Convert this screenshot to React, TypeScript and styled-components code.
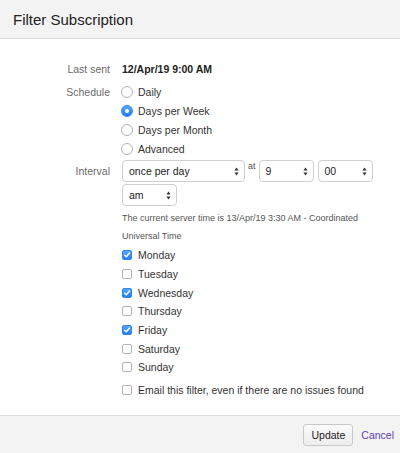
import React from 'react';
import styled, { createGlobalStyle } from 'styled-components';

const GlobalStyle = createGlobalStyle`
  html, body { margin: 0; padding: 0; background: #fff; }
  body { font-family: "Liberation Sans", Arial, sans-serif; color: #333; }
`;

// ─── Layout ──────────────────────────────────────────────────────────────────

const Dialog = styled.div`
  width: 400px;
  height: 453px;
  display: flex;
  flex-direction: column;
  background: #fff;
`;

const Header = styled.div`
  height: 39px;
  flex-shrink: 0;
  background: #f3f3f3;
  border-bottom: 1px solid #dcdcdc;
  display: flex;
  align-items: center;
  padding: 0 13px;
  box-sizing: border-box;
`;

const Title = styled.h2`
  margin: 0;
  font-size: 15px;
  font-weight: 400;
  color: #222;
`;

const Body = styled.div`
  flex: 1;
  padding-top: 21px;
  display: grid;
  grid-template-columns: 110px 1fr;
  column-gap: 12px;
  align-content: start;
  font-size: 10.5px;
`;

const Label = styled.div<{ top?: number }>`
  text-align: right;
  color: #6b6b6b;
  line-height: 19px;
  padding-top: ${p => p.top ?? 0}px;
`;

const Field = styled.div<{ mt?: number }>`
  margin-top: ${p => p.mt ?? 0}px;
`;

const Value = styled.div`
  font-weight: 700;
  color: #222;
  line-height: 19px;
`;

const OptionRow = styled.label<{ h?: number; mt?: number }>`
  display: flex;
  align-items: center;
  gap: 5px;
  height: ${p => p.h ?? 19}px;
  margin-top: ${p => p.mt ?? 0}px;
  color: #333;
`;

const Radio = styled.span<{ checked?: boolean }>`
  width: 12px;
  height: 12px;
  box-sizing: border-box;
  border-radius: 50%;
  border: 1px solid ${p => (p.checked ? '#2f86f6' : '#b3b3b3')};
  background: ${p => (p.checked ? 'linear-gradient(#5aa6fb, #1f7ef3)' : '#fff')};
  display: flex;
  align-items: center;
  justify-content: center;
  margin-left: -1px;
  &::after {
    content: '';
    width: 4px;
    height: 4px;
    border-radius: 50%;
    background: #fff;
    display: ${p => (p.checked ? 'block' : 'none')};
  }
`;

const Box = styled.span<{ checked?: boolean }>`
  width: 10px;
  height: 10px;
  box-sizing: border-box;
  border-radius: 2px;
  border: 1px solid ${p => (p.checked ? '#2f86f6' : '#b3b3b3')};
  background: ${p => (p.checked ? 'linear-gradient(#5aa6fb, #1f7ef3)' : '#fff')};
  display: flex;
  align-items: center;
  justify-content: center;
  margin-right: 1px;
`;

const SelectRow = styled.div`
  display: flex;
  flex-wrap: wrap;
  align-items: flex-start;
  row-gap: 1px;
  width: 260px;
`;

const Select = styled.div<{ w: number; ml?: number }>`
  width: ${p => p.w}px;
  height: 22px;
  margin-left: ${p => p.ml ?? 0}px;
  box-sizing: border-box;
  border: 1px solid #cfcfcf;
  border-radius: 4px;
  background: #fff;
  display: flex;
  align-items: center;
  justify-content: space-between;
  padding: 0 5px 0 6px;
  color: #222;
  font-size: 10.5px;
`;

const At = styled.span`
  font-size: 9px;
  color: #555;
  margin-left: 3px;
  padding-top: 1px;
`;

const Break = styled.div`
  flex-basis: 100%;
  height: 0;
`;

const Hint = styled.p`
  margin: 3px 0 0;
  font-size: 9px;
  line-height: 18px;
  color: #555;
  width: 250px;
`;

const Days = styled.div`
  margin-top: 1px;
`;

const Footer = styled.div`
  height: 38px;
  flex-shrink: 0;
  background: #f3f3f3;
  border-top: 1px solid #dcdcdc;
  display: flex;
  align-items: center;
  justify-content: flex-end;
  gap: 8px;
  padding-right: 6px;
  box-sizing: border-box;
`;

const Button = styled.button`
  height: 22px;
  padding: 0 7px;
  font-family: inherit;
  font-size: 10.5px;
  color: #222;
  background: linear-gradient(#fafafa, #ededed);
  border: 1px solid #c8c8c8;
  border-radius: 3px;
`;

const LinkButton = styled.a`
  font-size: 10.5px;
  color: #5b3fb0;
  text-decoration: none;
`;

// ─── Icons ───────────────────────────────────────────────────────────────────

const Arrows = () => (
  <svg width="5" height="9" viewBox="0 0 5 9">
    <path d="M2.5 0.5 L4.6 3.6 H0.4 Z" fill="#333" />
    <path d="M2.5 8.5 L4.6 5.4 H0.4 Z" fill="#333" />
  </svg>
);

const Check = () => (
  <svg width="8" height="8" viewBox="0 0 8 8">
    <path d="M1.6 4.2 L3.3 5.8 L6.5 2" stroke="#fff" strokeWidth="1.4" fill="none" strokeLinecap="round" strokeLinejoin="round" />
  </svg>
);

// ─── Component ───────────────────────────────────────────────────────────────

const schedules = [
  { name: 'Daily', checked: false },
  { name: 'Days per Week', checked: true },
  { name: 'Days per Month', checked: false },
  { name: 'Advanced', checked: false },
];

const days = [
  { name: 'Monday', checked: true },
  { name: 'Tuesday', checked: false },
  { name: 'Wednesday', checked: true },
  { name: 'Thursday', checked: false },
  { name: 'Friday', checked: true },
  { name: 'Saturday', checked: false },
  { name: 'Sunday', checked: false },
];

const App: React.FC = () => (
  <>
    <GlobalStyle />
    <Dialog>
      <Header>
        <Title>Filter Subscription</Title>
      </Header>

      <Body>
        <Label>Last sent</Label>
        <Value>12/Apr/19 9:00 AM</Value>

        <Label top={4}>Schedule</Label>
        <Field mt={3}>
          {schedules.map(s => (
            <OptionRow key={s.name}>
              <Radio checked={s.checked} />
              {s.name}
            </OptionRow>
          ))}
        </Field>

        <Label top={4}>Interval</Label>
        <Field mt={2}>
          <SelectRow>
            <Select w={123}>once per day<Arrows /></Select>
            <At>at</At>
            <Select w={55} ml={3}>9<Arrows /></Select>
            <Select w={55} ml={4}>00<Arrows /></Select>
            <Break />
            <Select w={55}>am<Arrows /></Select>
          </SelectRow>
          <Hint>The current server time is 13/Apr/19 3:30 AM - Coordinated Universal Time</Hint>
          <Days>
            {days.map(d => (
              <OptionRow key={d.name} h={18.7}>
                <Box checked={d.checked}>{d.checked && <Check />}</Box>
                {d.name}
              </OptionRow>
            ))}
          </Days>
          <OptionRow h={19} mt={4}>
            <Box />
            Email this filter, even if there are no issues found
          </OptionRow>
        </Field>
      </Body>

      <Footer>
        <Button>Update</Button>
        <LinkButton href="#">Cancel</LinkButton>
      </Footer>
    </Dialog>
  </>
);

export default App;
